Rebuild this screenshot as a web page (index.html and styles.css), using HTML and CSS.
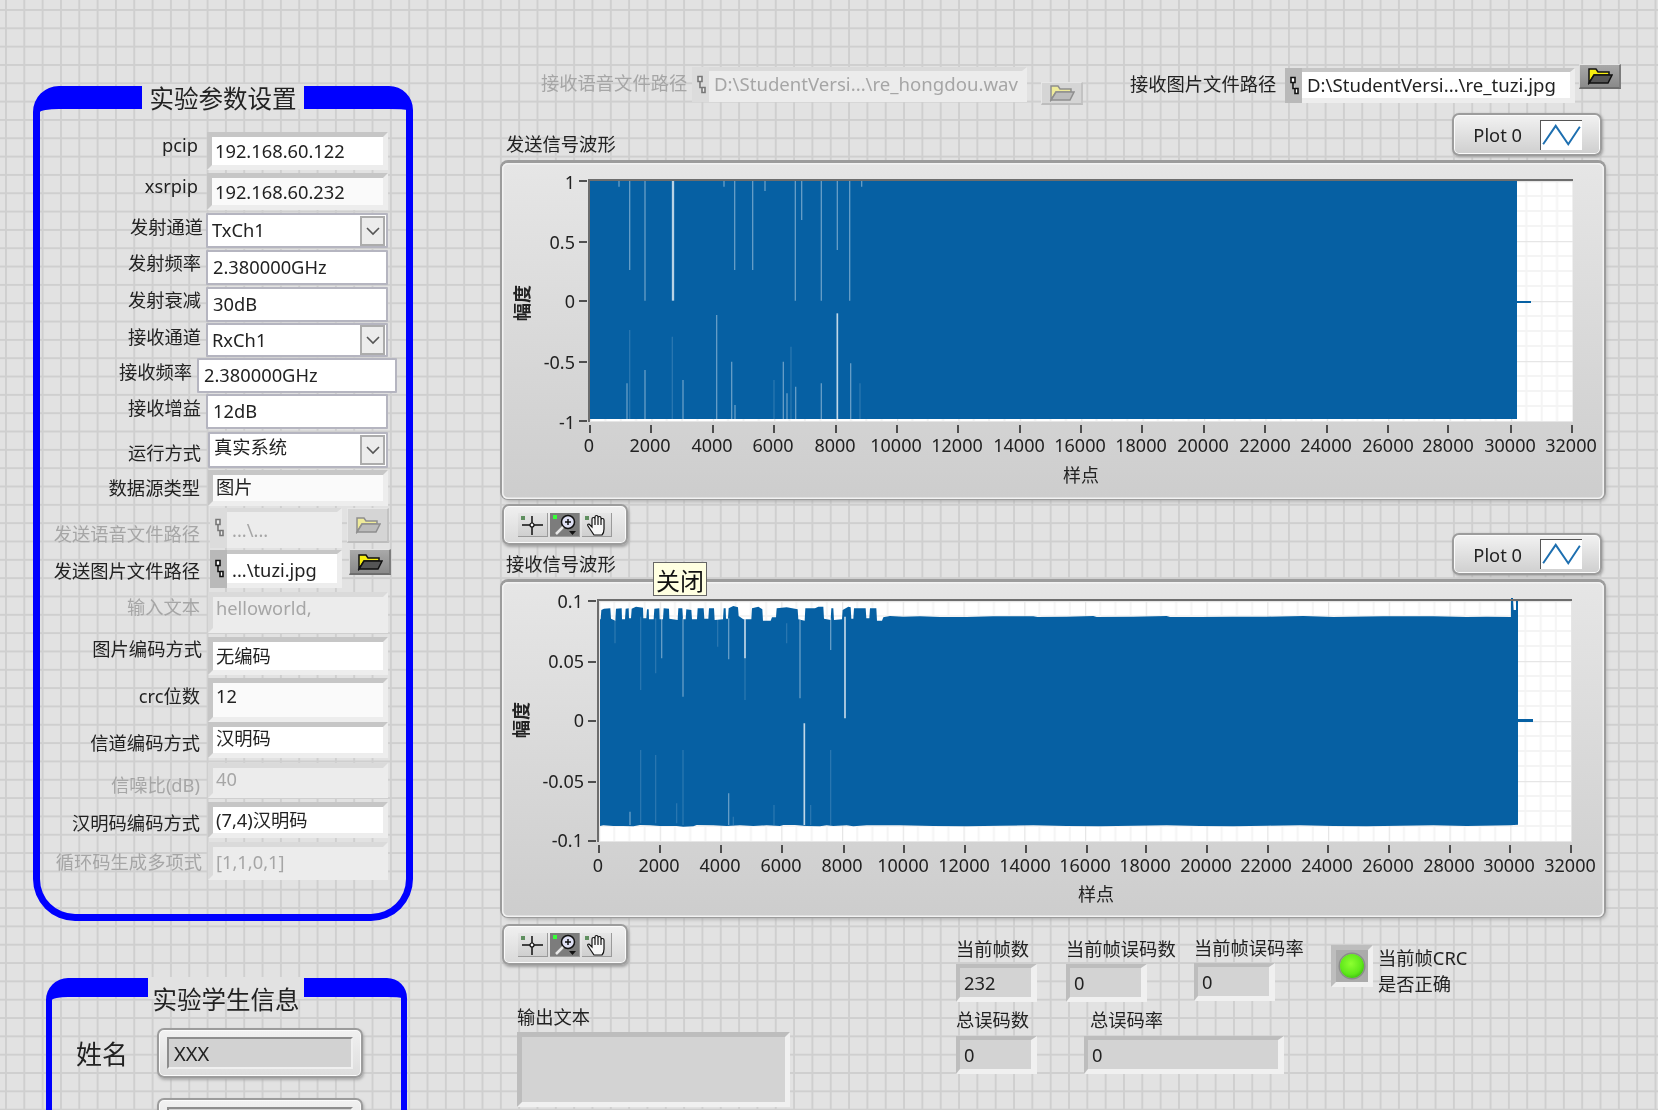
FILE: index.html
```html
<!DOCTYPE html>
<html lang="zh-CN">
<head>
<meta charset="utf-8">
<title>实验参数设置</title>
<link rel="stylesheet" href="styles.css">
</head>
<body>
<svg class="defs" width="0" height="0" aria-hidden="true">
  <defs>
    <symbol id="pathglyph" viewBox="0 0 10 20"><path class="glyph" d="M2 1.500h4v5h-4zM4 6.500v6h2M6 12.500h3v5h-3z"/></symbol>
    <symbol id="folder" viewBox="0 0 26 18"><path class="fold-flag" d="M2 16V2h7l2 3h11v3H7L2 16z"/><path class="fold-body" d="M7 8h18l-4 8H2z"/></symbol>
    <symbol id="chev" viewBox="0 0 16 10"><polyline class="chev" points="2,2 8,8 14,2"/></symbol>
    <symbol id="wave" viewBox="0 0 42 30"><polyline class="wave" points="2,24 15,5 28,24 40,6"/></symbol>
    <symbol id="cross" viewBox="0 0 29 23"><rect class="led-dim" x="3" y="3" width="4" height="4"/><path class="icn" d="M4 12h21M14 3v19"/><circle class="icn-w" cx="14" cy="12" r="2"/></symbol>
    <symbol id="zoomi" viewBox="0 0 29 23"><rect class="led-on" x="3" y="2" width="4" height="4"/><circle class="lens" cx="18" cy="9" r="6.500"/><path class="icn" d="M15 9h6M18 6v6"/><path class="handle" d="M13 14l-7 7"/><path class="tri" d="M19 18h7l-3.500 4z"/></symbol>
    <symbol id="hand" viewBox="0 0 29 23"><rect class="led-dim" x="3" y="3" width="4" height="4"/><path class="hand" d="M12 22L6 13q-1-2 1-2l3 3V6q0-1.500 1.500-1.500T13 6V4q0-1.500 1.500-1.500T16 4v1q0-1.500 1.500-1.500T19 5v2q0-1.500 1.500-1.500T22 7v9q0 4-2 6zM13 6v6M16 5v7M19 7v5"/></symbol>
  </defs>
</svg>

<main class="stage">

  <section class="panel panel-params">
    <h2 class="panel-title title-params">实验参数设置</h2>
    <div class="rows">
      <div class="row r1"><span class="lbl">pcip</span><div class="ctl bevel"><span class="txt">192.168.60.122</span></div></div>
      <div class="row r2"><span class="lbl">xsrpip</span><div class="ctl bevel soft"><span class="txt">192.168.60.232</span></div></div>
      <div class="row r3"><span class="lbl">发射通道</span><div class="ctl ring"><span class="txt">TxCh1</span><span class="drop"><svg width="16" height="10"><use href="#chev"/></svg></span></div></div>
      <div class="row r4"><span class="lbl">发射频率</span><div class="ctl ring"><span class="txt">2.380000GHz</span></div></div>
      <div class="row r5"><span class="lbl">发射衰减</span><div class="ctl ring"><span class="txt">30dB</span></div></div>
      <div class="row r6"><span class="lbl">接收通道</span><div class="ctl ring"><span class="txt">RxCh1</span><span class="drop"><svg width="16" height="10"><use href="#chev"/></svg></span></div></div>
      <div class="row r7"><span class="lbl">接收频率</span><div class="ctl ring"><span class="txt">2.380000GHz</span></div></div>
      <div class="row r8"><span class="lbl">接收增益</span><div class="ctl ring"><span class="txt">12dB</span></div></div>
      <div class="row r9"><span class="lbl">运行方式</span><div class="ctl ring"><span class="txt">真实系统</span><span class="drop"><svg width="16" height="10"><use href="#chev"/></svg></span></div></div>
      <div class="row r10"><span class="lbl">数据源类型</span><div class="ctl bevel soft"><span class="txt">图片</span></div></div>
      <div class="row r11 off"><span class="lbl">发送语音文件路径</span>
        <div class="ctl path-wrap">
          <div class="path bevel"><span class="tile"><svg width="10" height="20"><use href="#pathglyph"/></svg></span><span class="txt">...\...</span></div>
          <span class="browse"><svg width="26" height="18"><use href="#folder"/></svg></span>
        </div>
      </div>
      <div class="row r12"><span class="lbl">发送图片文件路径</span>
        <div class="ctl path-wrap">
          <div class="path bevel"><span class="tile"><svg width="10" height="20"><use href="#pathglyph"/></svg></span><span class="txt">...\tuzi.jpg</span></div>
          <span class="browse"><svg width="26" height="18"><use href="#folder"/></svg></span>
        </div>
      </div>
      <div class="row r13 off"><span class="lbl">输入文本</span><div class="ctl bevel"><span class="txt">helloworld,</span></div></div>
      <div class="row r14"><span class="lbl">图片编码方式</span><div class="ctl bevel"><span class="txt">无编码</span></div></div>
      <div class="row r15"><span class="lbl">crc位数</span><div class="ctl bevel soft"><span class="txt">12</span></div></div>
      <div class="row r16"><span class="lbl">信道编码方式</span><div class="ctl bevel"><span class="txt">汉明码</span></div></div>
      <div class="row r17 off"><span class="lbl">信噪比(dB)</span><div class="ctl bevel"><span class="txt">40</span></div></div>
      <div class="row r18"><span class="lbl">汉明码编码方式</span><div class="ctl bevel"><span class="txt">(7,4)汉明码</span></div></div>
      <div class="row r19 off"><span class="lbl">循环码生成多项式</span><div class="ctl bevel"><span class="txt">[1,1,0,1]</span></div></div>
    </div>
  </section>

  <section class="panel panel-student">
    <h2 class="panel-title title-student">实验学生信息</h2>
    <div class="student-row name-row">
      <span class="student-lbl">姓名</span>
      <div class="sunken-frame"><div class="sunken-inner">XXX</div></div>
    </div>
    <div class="student-row id-row">
      <span class="student-lbl"></span>
      <div class="sunken-frame"><div class="sunken-inner"></div></div>
    </div>
  </section>

  <div class="top-path tp-voice off">
    <span class="tp-lbl">接收语音文件路径</span>
    <div class="path bevel"><span class="tile"><svg width="10" height="20"><use href="#pathglyph"/></svg></span><span class="txt">D:\StudentVersi...\re_hongdou.wav</span></div>
    <span class="browse"><svg width="26" height="18"><use href="#folder"/></svg></span>
  </div>
  <div class="top-path tp-image">
    <span class="tp-lbl">接收图片文件路径</span>
    <div class="path bevel"><span class="tile"><svg width="10" height="20"><use href="#pathglyph"/></svg></span><span class="txt">D:\StudentVersi...\re_tuzi.jpg</span></div>
    <span class="browse"><svg width="26" height="18"><use href="#folder"/></svg></span>
  </div>

  <span class="graph-caption cap-tx">发送信号波形</span>
  <div class="legend leg-tx"><span>Plot 0</span><svg class="swatch" width="42" height="30"><use href="#wave"/></svg></div>

  <div class="graph graph-tx">
    <svg width="1102" height="336" viewBox="502 163 1102 336">
      <defs>
        <pattern id="grid1" x="590" y="181" width="61.4" height="60" patternUnits="userSpaceOnUse">
          <path class="minor" d="M15.350 0v60M30.700 0v60M46.050 0v60M0 15h61.400M0 30h61.400M0 45h61.400"/>
          <path class="major" d="M0 0v60M0 0h61.400"/>
        </pattern>
      </defs>
      <rect class="plotbg" x="589" y="180" width="984" height="242"/>
      <rect fill="url(#grid1)" x="589" y="180" width="984" height="242"/>
      <rect class="trace" x="589" y="181" width="928" height="238"/>
      <rect class="trace" x="1517" y="301" width="14" height="2"/>
      <g transform="translate(500 170) scale(.33333)">
        <path class="sp-b" d="M519 33V392"/>
        <path class="sp-b2" d="M1012 430V748"/>
        <path class="sp-n" d="M435 33V392M886 33V392M964 33V392M1049 33V392M389 33V300M704 33V300M758 33V300M905 33V150M795 33V63M357 33V50M672 33V50M1085 33V50M1012 33V240M650 435V748M695 575V748M850 575V748M1052 580V748M435 600V748M381 640V748M964 640V748M861 670V748M887 650V748M705 705V748M549 630V748"/>
        <path class="sp-f" d="M389 480V748M517 500V748M822 630V748M873 530V748M1080 640V748"/>
      </g>
      <path class="frame" d="M589 422V180H1573"/>
      <path class="tick" d="M579 181h8M579 242h8M579 301h8M579 362h8M579 421h8M590 425v8M651 425v8M713 425v8M774 425v8M836 425v8M897 425v8M958 425v8M1020 425v8M1081 425v8M1142 425v8M1204 425v8M1265 425v8M1327 425v8M1388 425v8M1448 425v8M1511 425v8M1572 425v8"/>
      <g class="ylab">
        <text x="575" y="189">1</text><text x="575" y="249">0.5</text><text x="575" y="308">0</text><text x="575" y="369">-0.5</text><text x="575" y="429">-1</text>
      </g>
      <g class="xlab">
        <text x="589" y="452">0</text><text x="650" y="452">2000</text><text x="712" y="452">4000</text><text x="773" y="452">6000</text><text x="835" y="452">8000</text><text x="896" y="452">10000</text><text x="957" y="452">12000</text><text x="1019" y="452">14000</text><text x="1080" y="452">16000</text><text x="1141" y="452">18000</text><text x="1203" y="452">20000</text><text x="1265" y="452">22000</text><text x="1326" y="452">24000</text><text x="1388" y="452">26000</text><text x="1448" y="452">28000</text><text x="1510" y="452">30000</text><text x="1571" y="452">32000</text>
      </g>
      <text class="axname" x="1081" y="482">样点</text>
      <text class="axname axrot" transform="translate(529 303) rotate(-90)">幅度</text>
    </svg>
  </div>

  <div class="toolbar tb-tx">
    <span class="tool"><svg width="29" height="23"><use href="#cross"/></svg></span>
    <span class="tool tool-on"><svg width="29" height="23"><use href="#zoomi"/></svg></span>
    <span class="tool"><svg width="29" height="23"><use href="#hand"/></svg></span>
  </div>

  <span class="graph-caption cap-rx">接收信号波形</span>
  <div class="legend leg-rx"><span>Plot 0</span><svg class="swatch" width="42" height="30"><use href="#wave"/></svg></div>

  <div class="graph graph-rx">
    <svg width="1102" height="335" viewBox="502 582 1102 335">
      <defs>
        <pattern id="grid2" x="599" y="601" width="60.75" height="60" patternUnits="userSpaceOnUse">
          <path class="minor" d="M15.200 0v60M30.400 0v60M45.600 0v60M0 15h60.750M0 30h60.750M0 45h60.750"/>
          <path class="major" d="M0 0v60M0 0h60.750"/>
        </pattern>
      </defs>
      <rect class="plotbg" x="598" y="600" width="974" height="242"/>
      <rect fill="url(#grid2)" x="598" y="600" width="974" height="242"/>
      <g transform="translate(500 590) scale(.33333)">
        <path class="trace" d="M300 708V88H302L304 60 312 56 331 55 333 86 346 92 348 56 365 55 366 88 375 88 377 56 386 55 387 85 393 85 395 56 408 50 429 53 430 85 439 85 441 58 446 58 447 88 461 88 463 56 478 55 479 88 489 88 491 55 507 56 508 86 533 90 535 55 547 55 549 88 557 88 559 58 574 60 576 88 591 88 593 55 611 55 613 86 625 86 627 55 642 55 644 90 669 88 671 55 677 55 678 86 684 86 686 55 700 48 714 52 716 78 730 88 754 88 756 55 775 50 787 58 789 92 812 92 816 82 828 82 830 55 860 52 893 58 895 88 914 92 916 55 945 55 955 50 970 50 972 86 992 90 994 55 1000 55 1002 90 1026 88 1028 60 1045 50 1052 52 1054 86 1060 86 1062 55 1097 55 1099 85 1108 85 1110 55 1129 55 1131 92 1146 92 1150 82 1170 78 1210 80 1260 79 1320 81 1400 81 1480 79 1600 79 1612 81 1700 80 1780 78 1790 81 1900 80 2000 78 2010 81 2100 81 2200 80 2300 80 2410 78 2500 81 2650 79 2800 79 2900 81 2960 80 3033 81 3033 24 3039 24 3041 60 3048 60 3048 30 3054 30 3054 704 3030 706 2900 708 2800 706 2700 707 2600 709 2500 708 2400 706 2300 707 2200 709 2100 708 2000 706 1900 707 1800 709 1700 708 1600 706 1500 707 1400 709 1300 708 1200 706 1100 706 1060 709 1040 706 1000 708 980 706 960 709 920 708 885 705 850 705 840 708 800 706 760 708 720 706 680 708 640 706 590 705 580 709 550 710 530 708 480 708 450 706 420 705 400 709 370 708 340 708 310 706z"/>
        <path class="sp-b2" d="M735 85V205M913 400V705M1035 80V385"/>
        <path class="sp-n" d="M485 85V205M390 665V705M549 85V320M686 85V208M686 610V705M900 90V325M992 85V180"/>
        <path class="sp-f" d="M345 90V160M422 80V300M422 480V700M467 85V250M467 495V700M530 640V700M549 480V705M653 85V170M735 205V330M932 645V705M992 480V705M822 645V705M700 680V705M860 100V160"/>
      </g>
      <rect class="trace" x="1518" y="719" width="15" height="3"/>
      <path class="frame" d="M598 842V600H1572"/>
      <path class="tick" d="M588 601h8M588 662h8M588 721h8M588 782h8M588 841h8M599 845v8M660 845v8M721 845v8M782 845v8M844 845v8M904 845v8M965 845v8M1026 845v8M1087 845v8M1146 845v8M1207 845v8M1268 845v8M1328 845v8M1389 845v8M1450 845v8M1510 845v8M1571 845v8"/>
      <g class="ylab">
        <text x="583" y="608">0.1</text><text x="584" y="668">0.05</text><text x="584" y="727">0</text><text x="584" y="788">-0.05</text><text x="583" y="847">-0.1</text>
      </g>
      <g class="xlab">
        <text x="598" y="872">0</text><text x="659" y="872">2000</text><text x="720" y="872">4000</text><text x="781" y="872">6000</text><text x="842" y="872">8000</text><text x="903" y="872">10000</text><text x="964" y="872">12000</text><text x="1025" y="872">14000</text><text x="1085" y="872">16000</text><text x="1145" y="872">18000</text><text x="1206" y="872">20000</text><text x="1266" y="872">22000</text><text x="1327" y="872">24000</text><text x="1388" y="872">26000</text><text x="1449" y="872">28000</text><text x="1509" y="872">30000</text><text x="1570" y="872">32000</text>
      </g>
      <text class="axname" x="1096" y="901">样点</text>
      <text class="axname axrot" transform="translate(528 720) rotate(-90)">幅度</text>
    </svg>
  </div>

  <div class="toolbar tb-rx">
    <span class="tool"><svg width="29" height="23"><use href="#cross"/></svg></span>
    <span class="tool tool-on"><svg width="29" height="23"><use href="#zoomi"/></svg></span>
    <span class="tool"><svg width="29" height="23"><use href="#hand"/></svg></span>
  </div>

  <div class="tooltip">关闭</div>

  <div class="ind out-text"><span>输出文本</span><div class="bevel gray out-field"></div></div>
  <div class="ind i1"><span>当前帧数</span><div class="bevel gray num">232</div></div>
  <div class="ind i2"><span>当前帧误码数</span><div class="bevel gray num">0</div></div>
  <div class="ind i3"><span>当前帧误码率</span><div class="bevel gray num">0</div></div>
  <div class="ind i4"><span>总误码数</span><div class="bevel gray num">0</div></div>
  <div class="ind i5"><span class="i5-lbl">总误码率</span><div class="bevel gray num wide">0</div></div>
  <div class="crc">
    <div class="led-box"><span class="led"></span></div>
    <span class="crc-lbl">当前帧CRC<br>是否正确</span>
  </div>

</main>
</body>
</html>
```
FILE: styles.css
```css
* { box-sizing: border-box; }
html, body { margin: 0; padding: 0; height: 100%; overflow: hidden; }
body {
  background-color: #e2e2e2;
  background-image:
    linear-gradient(to right, #cfcfcf 2px, transparent 2px),
    linear-gradient(to bottom, #cfcfcf 2px, transparent 2px);
  background-size: 18.33px 18.33px;
  background-position: 5px 9px;
  font-family: "Noto Sans", "Noto Sans CJK SC", sans-serif;
  font-size: 18.3px;
  color: #222;
}
.defs { position: absolute; }
.stage { position: relative; width: 1658px; height: 1110px; overflow: hidden; filter: blur(.35px); }

/* blue group frames */
.panel { position: absolute; border-style: solid; border-color: #0000ff; }
.panel-params {
  left: 33px; top: 86px; width: 380px; height: 835px;
  border-width: 23px 7px 7px;
  border-radius: 26px 24px 42px 42px;
  padding-top: 23px;
}
.panel-student {
  left: 46px; top: 978px; width: 361px; height: 200px;
  border-width: 19px 6px 6px;
  border-radius: 22px 20px 0 0;
  padding-top: 31px;
}
.panel-title {
  position: absolute; margin: 0;
  display: flex; align-items: center; justify-content: center;
  font-size: 24.5px; font-weight: 400; color: #222; white-space: nowrap;
  background: linear-gradient(#e2e2e2, #e2e2e2) no-repeat top / 100% var(--cover);
}
.title-params { --cover: 25px; left: 102px; top: -24px; width: 162px; height: 26px; margin-top: -1px; }
.title-student { --cover: 22px; left: 96px; top: -20px; width: 156px; height: 42px; }

/* parameter rows */
.rows { display: flex; flex-direction: column; }
.row { display: flex; align-items: flex-start; height: var(--h); margin-top: var(--gap, 0); }
.lbl { flex: none; width: var(--lw); margin-top: var(--lt); line-height: 20px; text-align: right; white-space: nowrap; }
.ctl { flex: none; height: 100%; margin-left: var(--cl); width: var(--cw, 182px); }
.r1  { --h: 38px; --lt: 3px;  --lw: 158px; --cl: 9px; --cw: 181px; }
.r2  { --h: 37px; --gap: 3px; --lt: 3px;  --lw: 158px; --cl: 9px; --cw: 181px; }
.r3  { --h: 35px; --gap: 3px; --lt: 4px;  --lw: 163px; --cl: 3px; --ty: -2px; }
.r4  { --h: 35px; --gap: 2px; --lt: 3px;  --lw: 161px; --cl: 5px; --ty: -2px; }
.r5  { --h: 35px; --gap: 2px; --lt: 3px;  --lw: 161px; --cl: 5px; --ty: -2px; }
.r6  { --h: 34px; --gap: 1px; --lt: 4px;  --lw: 161px; --cl: 5px; }
.r7  { --h: 35px; --gap: 1px; --lt: 4px;  --lw: 152px; --cl: 5px; --cw: 200px; --ty: -2px; }
.r8  { --h: 35px; --gap: 1px; --lt: 4px;  --lw: 161px; --cl: 5px; --ty: -2px; }
.r9  { --h: 36px; --gap: 3px; --lt: 11px; --lw: 161px; --cl: 7px; --cw: 180px; --ty: -6px; }
.r10 { --h: 36px; --gap: 2px; --lt: 8px;  --lw: 160px; --cl: 8px; --cw: 180px; --ty: -2px; }
.r11 { --h: 40px; --gap: 2px; --lt: 16px; --lw: 160px; --cl: 10px; --cw: 179px; --ty: 4px; }
.r12 { --h: 38px; --gap: 2px; --lt: 11px; --lw: 160px; --cl: 10px; --cw: 179px; --ty: 2px; }
.r13 { --h: 41px; --gap: 4px; --lt: 5px;  --lw: 160px; --cl: 8px; --cw: 180px; --ty: -9px; }
.r14 { --h: 38px; --gap: 4px; --lt: 2px;  --lw: 162px; --cl: 6px; --cw: 180px; }
.r15 { --h: 44px; --gap: 3px; --lt: 8px;  --lw: 160px; --cl: 8px; --cw: 180px; --ty: -8px; }
.r16 { --h: 36px; --lt: 11px; --lw: 160px; --cl: 8px; --cw: 180px; --ty: -4px; }
.r17 { --h: 35px; --gap: 5px; --lt: 12px; --lw: 160px; --cl: 8px; --cw: 180px; --ty: -4px; }
.r18 { --h: 36px; --gap: 4px; --lt: 11px; --lw: 160px; --cl: 8px; --cw: 180px; }
.r19 { --h: 38px; --gap: 4px; --lt: 10px; --lw: 162px; --cl: 6px; --cw: 180px; --ty: 2px; }
.r3 .txt, .r6 .txt, .r9 .txt { padding-left: 0; }
.r4 .txt, .r5 .txt, .r7 .txt, .r8 .txt { padding-left: 1px; }
.r13 .txt, .r15 .txt, .r16 .txt, .r17 .txt, .r18 .txt, .r19 .txt { padding-left: 3px; }

/* recessed LabVIEW fields */
.bevel {
  display: flex; align-items: center;
  border-style: solid; border-width: 5px;
  border-color: #c6c6c6 #ededed #ededed #c6c6c6;
  background: #fff;
}
.bevel.soft { background: #fafafa; }
.bevel.gray { background: #d3d3d3; border-color: #bdbdbd #f0f0f0 #f0f0f0 #bdbdbd; }
.txt { margin-top: var(--ty, 0); padding-left: 3px; white-space: nowrap; line-height: 22px; }

.ring {
  display: flex; align-items: center;
  background: #fff; border: 2px solid #b5b5c0; padding-left: 4px;
  border-radius: 1px;
}
.drop {
  display: flex; align-items: center; justify-content: center;
  width: 25px; height: 30px; margin-left: auto; margin-right: 1px;
  background: #ececec; border: 2px solid #acacac;
}
.chev { fill: none; stroke: #555; stroke-width: 1.6; }

/* path controls */
.path-wrap { display: flex; align-items: flex-start; }
.path { flex: none; height: 100%; width: 132px; padding: 0; border-width: 4px 5px 5px 0; }
.tile {
  flex: none; display: flex; align-items: center; justify-content: center;
  align-self: stretch; width: 17px; margin-top: -4px; margin-bottom: -5px;
  background: #b9b9b9;
}
.path .txt { padding-left: 5px; }
.glyph { fill: var(--glyph-fill, #fff); stroke: var(--glyph-stroke, #111); stroke-width: 1.6; }
.browse {
  flex: none; display: flex; align-items: center; justify-content: center;
  width: 42px; height: 26px; margin: -1px 0 0 7px;
  background: linear-gradient(#a9a9a9, #8a8a8a);
  border-style: solid; border-width: 1px 2px 2px 1px;
  border-color: #e5e5e5 #7c7c7c #6e6e6e #dcdcdc;
}
.fold-flag { fill: var(--flag, #f7ee10); stroke: var(--fold-line, #111); stroke-width: 1.5; }
.fold-body { fill: var(--fold, #555); stroke: var(--fold-line, #111); stroke-width: 1.5; }

.r11 .browse { height: 35px; margin-top: 0; margin-left: 5px; }

/* disabled state */
.off { --glyph-fill: #eee; --glyph-stroke: #777; --flag: #efeb9a; --fold: #bcbcbc; --fold-line: #8e8e8e; }
.off, .off .lbl { color: #a6a6a6; }
.off .bevel { background: #ececec; border-color: #dadada #ececec #ececec #dadada; }
.off .tile { background: #dcdcdc; }
.off .browse { background: #d5d5d5; border-color: #e6e6e6 #c3c3c3 #bdbdbd #e6e6e6; }

/* student info */
.student-row { display: flex; align-items: center; }
.student-row + .student-row { margin-top: 20px; }
.student-lbl { width: 105px; padding-left: 24px; font-size: 26px; white-space: nowrap; }
.sunken-frame {
  width: 206px; height: 50px; padding: 7px 8px;
  border: 2px solid #9c9c9c; border-radius: 7px;
  background: linear-gradient(#f1f1f1, #dddddd);
  box-shadow: 1px 2px 3px #a8a8a8, inset 0 0 0 1px #fbfbfb;
}
.sunken-inner {
  height: 100%; padding-left: 5px;
  display: flex; align-items: center;
  background: #d2d2d2; border: 2px solid; border-color: #8d8d8d #f0f0f0 #f0f0f0 #8d8d8d;
  font-size: 20px;
}

/* top path controls */
.top-path { position: absolute; display: flex; align-items: flex-start; }
.tp-voice { left: 541px; top: 67px; }
.tp-image { left: 1130px; top: 68px; }
.tp-lbl { flex: none; width: 147px; margin-top: 6px; line-height: 20px; white-space: nowrap; }
.top-path .path { height: 35px; }
.top-path .txt { font-size: 18.6px; }
.tp-voice .path { width: 335px; margin-left: 4px; }
.tp-image .path { width: 290px; margin-left: 8px; }
.tp-voice .browse { height: 23px; margin: 15px 0 0 14px; }
.tp-image .browse { height: 25px; margin: -4px 0 0 4px; }

/* graphs */
.graph-caption { position: absolute; line-height: 20px; white-space: nowrap; }
.cap-tx { left: 506px; top: 134px; }
.cap-rx { left: 506px; top: 554px; }
.graph {
  position: absolute; left: 502px; width: 1102px;
  border-radius: 6px;
  background: linear-gradient(#e6e6e6, #cdcdcd);
  box-shadow: 0 -1px 0 2px #9c9c9c, inset 0 0 0 1.5px #f2f2f2, 2px 2px 4px #a5a5a5;
}
.graph svg { display: block; }
.graph-tx { top: 163px; height: 336px; }
.graph-rx { top: 582px; height: 335px; }
.plotbg { fill: #fff; }
.minor { stroke: #f4f4f4; stroke-width: 2; fill: none; }
.major { stroke: #e6e6e6; stroke-width: 2.5; fill: none; }
.trace { fill: #0660a3; }
.sp-b  { stroke: #fff; stroke-opacity: .72; stroke-width: 7; fill: none; }
.sp-b2 { stroke: #fff; stroke-opacity: .75; stroke-width: 5; fill: none; }
.sp-n  { stroke: #fff; stroke-opacity: .38; stroke-width: 4; fill: none; }
.sp-f  { stroke: #fff; stroke-opacity: .14; stroke-width: 4; fill: none; }
.frame { fill: none; stroke: #6d6d6d; stroke-width: 2; }
.tick  { fill: none; stroke: #222; stroke-width: 1.5; }
.ylab text { font-size: 18px; text-anchor: end; fill: #222; }
.xlab text { font-size: 18px; text-anchor: middle; fill: #222; }
.axname { font-size: 18px; text-anchor: middle; fill: #222; }
.axrot { font-weight: 700; }

.legend {
  position: absolute; left: 1452px; width: 150px;
  display: flex; align-items: center; justify-content: flex-end; gap: 18px;
  padding-right: 18px;
  border: 2px solid #9c9c9c; border-radius: 7px;
  background: linear-gradient(#f2f2f2, #cfcfcf);
  box-shadow: 1px 1px 3px #9f9f9f, inset 0 0 0 1px #fbfbfb;
}
.leg-tx { top: 113px; height: 43px; }
.leg-rx { top: 533px; height: 42px; }
.swatch { background: #fff; border-top: 1.5px solid #555; border-left: 1.5px solid #555; }
.wave { fill: none; stroke: #1d6fb0; stroke-width: 2; }

/* graph palettes */
.toolbar {
  position: absolute; left: 502px; width: 126px; height: 41px;
  display: flex; align-items: center; gap: 2px; padding-left: 14px;
  border: 2px solid #9c9c9c; border-radius: 7px;
  background: linear-gradient(#f0f0f0, #d9d9d9);
  box-shadow: 1px 2px 3px #a0a0a0, inset 0 0 0 1px #fbfbfb;
}
.tb-tx { top: 504px; }
.tb-rx { top: 924px; }
.tool {
  display: block; width: 30px; height: 24px;
  background: linear-gradient(#e6e6e6, #cfcfcf);
  border-bottom: 1px solid #9a9a9a; border-right: 1px solid #9a9a9a;
}
.tool-on { background: #7c7c7c; }
.led-dim { fill: #5f8f5f; }
.led-on { fill: #39ff39; }
.icn { fill: none; stroke: #111; stroke-width: 1.5; }
.icn-w { fill: #fff; stroke: #111; stroke-width: 1.2; }
.lens { fill: #dfe0f4; stroke: #111; stroke-width: 1.5; }
.handle { fill: none; stroke: #e8e8e8; stroke-width: 2.5; }
.tri { fill: #111; }
.hand { fill: #f7f7f7; stroke: #111; stroke-width: 1.2; }

.tooltip {
  position: absolute; left: 653px; top: 562px; width: 54px; height: 34px;
  display: flex; align-items: center; justify-content: center;
  background: #ffffe1; border: 1px solid #666; font-size: 24px; color: #111;
}

/* indicators */
.ind { position: absolute; display: flex; flex-direction: column; gap: 5px; line-height: 20px; white-space: nowrap; }
.num { width: 81px; height: 38px; padding-left: 4px; border-width: 4px 6px 5px 4px; }
.num.wide { width: 200px; }
.i1 { left: 956px; top: 939px; }
.i2 { left: 1066px; top: 939px; }
.i3 { left: 1194px; top: 938px; }
.i4 { left: 956px; top: 1010px; gap: 6px; }
.i5 { left: 1084px; top: 1010px; gap: 6px; }
.i5-lbl { padding-left: 6px; }
.out-text { left: 517px; top: 1007px; gap: 5px; }
.out-field { width: 273px; height: 75px; }

.crc { position: absolute; left: 1331px; top: 945px; display: flex; gap: 5px; }
.led-box {
  flex: none; width: 42px; height: 42px;
  display: flex; align-items: center; justify-content: center;
  border-style: solid; border-width: 5px;
  border-color: #bdbdbd #f0f0f0 #f0f0f0 #bdbdbd;
  background: #ababab;
}
.led {
  width: 24px; height: 24px; border-radius: 50%;
  background: radial-gradient(circle at 45% 40%, #8dff30 0, #5fe81a 55%, #1f9c06 100%);
  box-shadow: 0 0 0 1.5px #8b8b8b;
}
.crc-lbl { line-height: 26px; white-space: nowrap; }
```
